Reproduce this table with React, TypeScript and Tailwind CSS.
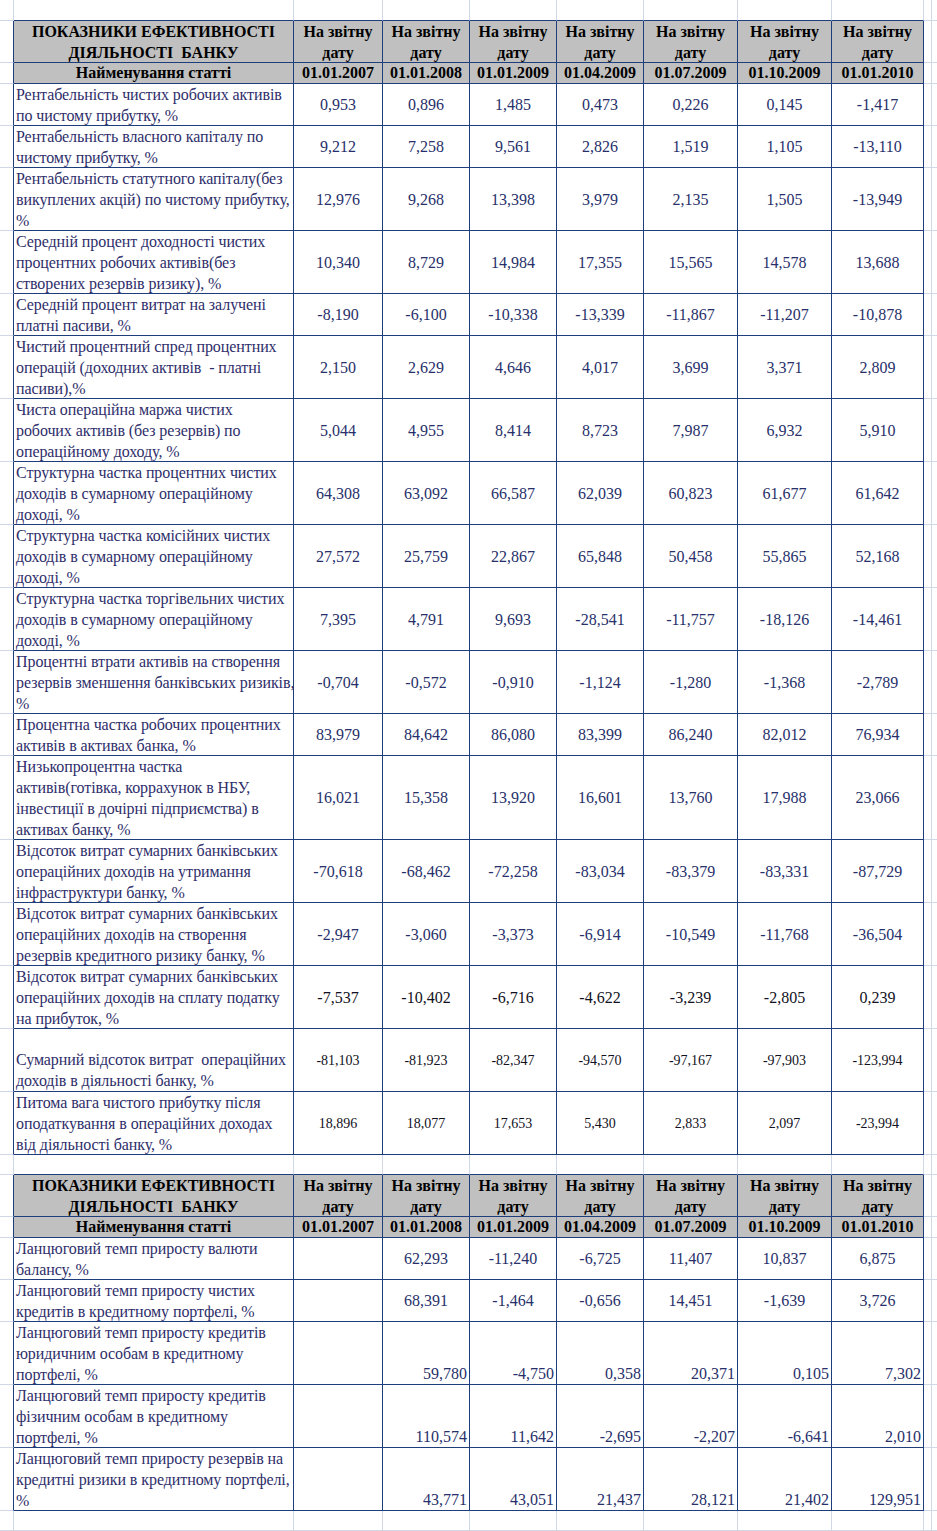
const GRID = "grid grid-rows-[minmax(0,1fr)] grid-cols-[14px_280px_89px_87px_87px_87px_94px_94px_92px_8px_1fr]";

const HEIGHTS: Record<number, string> = {
  20: "h-[20px]",
  21: "h-[21px]",
  42: "h-[42px]",
  63: "h-[63px]",
  84: "h-[84px]",
};

const DATES = ["01.01.2007", "01.01.2008", "01.01.2009", "01.04.2009", "01.07.2009", "01.10.2009", "01.01.2010"];

type Row = {
  label: string[];
  values: string[];
  h: number;
  labelBottom?: boolean;
  cornerValues?: boolean;
  small?: boolean;
  black?: boolean;
};

const TABLE_ONE: Row[] = [
  { h: 42, label: ["Рентабельність чистих робочих активів", "по чистому прибутку, %"], values: ["0,953", "0,896", "1,485", "0,473", "0,226", "0,145", "-1,417"] },
  { h: 42, label: ["Рентабельність власного капіталу по", "чистому прибутку, %"], values: ["9,212", "7,258", "9,561", "2,826", "1,519", "1,105", "-13,110"] },
  { h: 63, label: ["Рентабельність статутного капіталу(без", "викуплених акцій) по чистому прибутку,", "%"], values: ["12,976", "9,268", "13,398", "3,979", "2,135", "1,505", "-13,949"] },
  { h: 63, label: ["Середній процент доходності чистих", "процентних робочих активів(без", "створених резервів ризику), %"], values: ["10,340", "8,729", "14,984", "17,355", "15,565", "14,578", "13,688"] },
  { h: 42, label: ["Середній процент витрат на залучені", "платні пасиви, %"], values: ["-8,190", "-6,100", "-10,338", "-13,339", "-11,867", "-11,207", "-10,878"] },
  { h: 63, label: ["Чистий процентний спред процентних", "операцій (доходних активів  - платні", "пасиви),%"], values: ["2,150", "2,629", "4,646", "4,017", "3,699", "3,371", "2,809"] },
  { h: 63, label: ["Чиста операційна маржа чистих", "робочих активів (без резервів) по", "операційному доходу, %"], values: ["5,044", "4,955", "8,414", "8,723", "7,987", "6,932", "5,910"] },
  { h: 63, label: ["Структурна частка процентних чистих", "доходів в сумарному операційному", "доході, %"], values: ["64,308", "63,092", "66,587", "62,039", "60,823", "61,677", "61,642"] },
  { h: 63, label: ["Структурна частка комісійних чистих", "доходів в сумарному операційному", "доході, %"], values: ["27,572", "25,759", "22,867", "65,848", "50,458", "55,865", "52,168"] },
  { h: 63, label: ["Структурна частка торгівельних чистих", "доходів в сумарному операційному", "доході, %"], values: ["7,395", "4,791", "9,693", "-28,541", "-11,757", "-18,126", "-14,461"] },
  { h: 63, label: ["Процентні втрати активів на створення", "резервів зменшення банківських ризиків,", "%"], values: ["-0,704", "-0,572", "-0,910", "-1,124", "-1,280", "-1,368", "-2,789"] },
  { h: 42, label: ["Процентна частка робочих процентних", "активів в активах банка, %"], values: ["83,979", "84,642", "86,080", "83,399", "86,240", "82,012", "76,934"] },
  { h: 84, label: ["Низькопроцентна частка", "активів(готівка, коррахунок в НБУ,", "інвестиції в дочірні підприємства) в", "активах банку, %"], values: ["16,021", "15,358", "13,920", "16,601", "13,760", "17,988", "23,066"] },
  { h: 63, label: ["Відсоток витрат сумарних банківських", "операційних доходів на утримання", "інфраструктури банку, %"], values: ["-70,618", "-68,462", "-72,258", "-83,034", "-83,379", "-83,331", "-87,729"] },
  { h: 63, label: ["Відсоток витрат сумарних банківських", "операційних доходів на створення", "резервів кредитного ризику банку, %"], values: ["-2,947", "-3,060", "-3,373", "-6,914", "-10,549", "-11,768", "-36,504"] },
  { h: 63, black: true, label: ["Відсоток витрат сумарних банківських", "операційних доходів на сплату податку", "на прибуток, %"], values: ["-7,537", "-10,402", "-6,716", "-4,622", "-3,239", "-2,805", "0,239"] },
  { h: 63, black: true, small: true, labelBottom: true, label: ["Сумарний відсоток витрат  операційних", "доходів в діяльності банку, %"], values: ["-81,103", "-81,923", "-82,347", "-94,570", "-97,167", "-97,903", "-123,994"] },
  { h: 63, black: true, small: true, label: ["Питома вага чистого прибутку після", "оподаткування в операційних доходах", "від діяльності банку, %"], values: ["18,896", "18,077", "17,653", "5,430", "2,833", "2,097", "-23,994"] },
];

const TABLE_TWO: Row[] = [
  { h: 42, label: ["Ланцюговий темп приросту валюти", "балансу, %"], values: ["", "62,293", "-11,240", "-6,725", "11,407", "10,837", "6,875"] },
  { h: 42, label: ["Ланцюговий темп приросту чистих", "кредитів в кредитному портфелі, %"], values: ["", "68,391", "-1,464", "-0,656", "14,451", "-1,639", "3,726"] },
  { h: 63, cornerValues: true, label: ["Ланцюговий темп приросту кредитів", "юридичним особам в кредитному", "портфелі, %"], values: ["", "59,780", "-4,750", "0,358", "20,371", "0,105", "7,302"] },
  { h: 63, cornerValues: true, label: ["Ланцюговий темп приросту кредитів", "фізичним особам в кредитному", "портфелі, %"], values: ["", "110,574", "11,642", "-2,695", "-2,207", "-6,641", "2,010"] },
  { h: 63, cornerValues: true, label: ["Ланцюговий темп приросту резервів на", "кредитні ризики в кредитному портфелі,", "%"], values: ["", "43,771", "43,051", "21,437", "28,121", "21,402", "129,951"] },
];

function Margins() {
  return (
    <>
      <div className="border-r border-b border-[#d0d7e5]" />
      <div className="border-b border-[#d0d7e5]" />
    </>
  );
}

function BlankRow({ h, aboveTable }: { h: number; aboveTable?: boolean }) {
  return (
    <div className={`${GRID} ${HEIGHTS[h]}`}>
      <div className="border-r border-b border-[#d0d7e5]" />
      {Array.from({ length: 8 }).map((_, i) => (
        <div
          key={i}
          className={`border-r border-b border-r-[#d0d7e5] ${aboveTable ? "border-b-[#1f3d7a]" : "border-b-[#d0d7e5]"}`}
        />
      ))}
      <Margins />
    </div>
  );
}

function TableHead() {
  return (
    <>
      <div className={`${GRID} h-[42px] font-bold text-black leading-[21px]`}>
        <div className="border-r border-b border-r-[#1f3d7a] border-b-[#d0d7e5]" />
        <div className="bg-[#c0c0c0] border-r border-b border-[#1f3d7a] flex flex-col items-center overflow-hidden">
          <span>ПОКАЗНИКИ ЕФЕКТИВНОСТІ</span>
          <span className="whitespace-pre">ДІЯЛЬНОСТІ  БАНКУ</span>
        </div>
        {DATES.map((d) => (
          <div key={d} className="bg-[#c0c0c0] border-r border-b border-[#1f3d7a] flex flex-col items-center overflow-hidden">
            <span>На звітну</span>
            <span>дату</span>
          </div>
        ))}
        <Margins />
      </div>
      <div className={`${GRID} h-[21px] font-bold text-black leading-[20px]`}>
        <div className="border-r border-b border-r-[#1f3d7a] border-b-[#d0d7e5]" />
        <div className="bg-[#c0c0c0] border-r border-b border-[#1f3d7a] text-center">Найменування статті</div>
        {DATES.map((d) => (
          <div key={d} className="bg-[#c0c0c0] border-r border-b border-[#1f3d7a] text-center whitespace-nowrap">
            {d}
          </div>
        ))}
        <Margins />
      </div>
    </>
  );
}

function DataRow({ row }: { row: Row }) {
  return (
    <div className={`${GRID} ${HEIGHTS[row.h]}`}>
      <div className="border-r border-b border-r-[#1f3d7a] border-b-[#d0d7e5]" />
      <div
        className={`border-r border-b border-[#1f3d7a] pl-[2px] leading-[21px] tracking-[-0.08px] text-[#2e2e6a] whitespace-pre flex flex-col ${row.labelBottom ? "justify-end" : "justify-start"}`}
      >
        {row.label.map((line, i) => (
          <span key={i}>{line}</span>
        ))}
      </div>
      {row.values.map((v, i) => (
        <div
          key={i}
          className={`border-r border-b border-[#1f3d7a] flex whitespace-nowrap leading-[21px] ${
            row.cornerValues ? "items-end justify-end pr-[2px]" : "items-center justify-center"
          } ${row.small ? "text-[14px]" : "text-[16px]"} ${row.black ? "text-[#111122]" : "text-[#27306a]"}`}
        >
          {v}
        </div>
      ))}
      <Margins />
    </div>
  );
}

export default function App() {
  return (
    <div className="w-[937px] h-[1531px] overflow-hidden bg-white font-['Liberation_Serif','Times_New_Roman',serif] text-[16px]">
      <BlankRow h={21} aboveTable />
      <TableHead />
      {TABLE_ONE.map((row, i) => (
        <DataRow key={i} row={row} />
      ))}
      <BlankRow h={20} aboveTable />
      <TableHead />
      {TABLE_TWO.map((row, i) => (
        <DataRow key={i} row={row} />
      ))}
      <BlankRow h={20} />
    </div>
  );
}
